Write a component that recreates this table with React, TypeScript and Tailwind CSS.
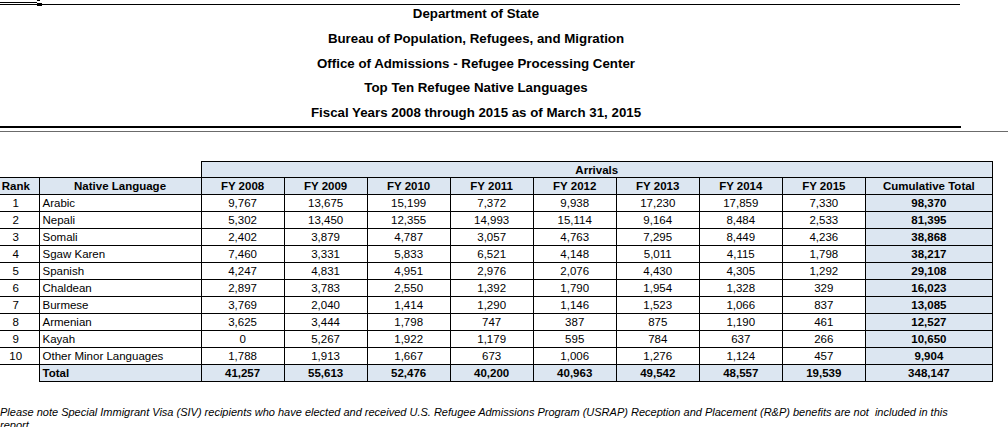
import React from "react";

const rows: [string, string, string[], string][] = [
  ["1", "Arabic", ["9,767", "13,675", "15,199", "7,372", "9,938", "17,230", "17,859", "7,330"], "98,370"],
  ["2", "Nepali", ["5,302", "13,450", "12,355", "14,993", "15,114", "9,164", "8,484", "2,533"], "81,395"],
  ["3", "Somali", ["2,402", "3,879", "4,787", "3,057", "4,763", "7,295", "8,449", "4,236"], "38,868"],
  ["4", "Sgaw Karen", ["7,460", "3,331", "5,833", "6,521", "4,148", "5,011", "4,115", "1,798"], "38,217"],
  ["5", "Spanish", ["4,247", "4,831", "4,951", "2,976", "2,076", "4,430", "4,305", "1,292"], "29,108"],
  ["6", "Chaldean", ["2,897", "3,783", "2,550", "1,392", "1,790", "1,954", "1,328", "329"], "16,023"],
  ["7", "Burmese", ["3,769", "2,040", "1,414", "1,290", "1,146", "1,523", "1,066", "837"], "13,085"],
  ["8", "Armenian", ["3,625", "3,444", "1,798", "747", "387", "875", "1,190", "461"], "12,527"],
  ["9", "Kayah", ["0", "5,267", "1,922", "1,179", "595", "784", "637", "266"], "10,650"],
  ["10", "Other Minor Languages", ["1,788", "1,913", "1,667", "673", "1,006", "1,276", "1,124", "457"], "9,904"],
];

const totals = ["41,257", "55,613", "52,476", "40,200", "40,963", "49,542", "48,557", "19,539"];
const years = ["FY 2008", "FY 2009", "FY 2010", "FY 2011", "FY 2012", "FY 2013", "FY 2014", "FY 2015"];

export default function App() {
  return (
    <div className="w-[1008px] h-[427px] overflow-hidden bg-white text-black font-['Liberation_Sans',Arial,sans-serif]">
      {/* top rule */}
      <div className="relative h-[5px] w-[960px]">
        <div className="absolute left-0 top-[2px] w-[37px] h-[1px] bg-black" />
        <div className="absolute left-0 top-[4px] w-[960px] h-[1px] bg-black" />
        <div className="absolute left-[37px] top-0 w-[3px] h-[1px] bg-black" />
        <div className="absolute left-[37px] top-[3px] w-[5px] h-[3px] bg-black" />
      </div>
      {/* titles */}
      <div className="w-[952px] text-center font-bold text-[13.3px]">
        <div className="h-[22px] pt-[2px] leading-[14px]">Department of State</div>
        <div className="h-[24.5px] leading-[24.5px]">Bureau of Population, Refugees, and Migration</div>
        <div className="h-[24.5px] leading-[24.5px]">Office of Admissions - Refugee Processing Center</div>
        <div className="h-[24.5px] leading-[24.5px]">Top Ten Refugee Native Languages</div>
        <div className="h-[24.5px] leading-[24.5px]">Fiscal Years 2008 through 2015 as of March 31, 2015</div>
      </div>
      <div className="mt-[1px] w-[961px] h-[2px] bg-black" />
      <div className="mt-[3px] w-full h-[1px] bg-[#6b6b6b]" />

      {/* table */}
      <table className="mt-[29px] table-fixed border-collapse w-[993px] text-[11.5px]">
        <colgroup>
          <col className="w-[39px]" />
          <col className="w-[162px]" />
          {years.map((y) => (
            <col key={y} className="w-[83px]" />
          ))}
          <col className="w-[127px]" />
        </colgroup>
        <tbody>
          <tr className="h-[16px]">
            <td className="p-0" />
            <td className="p-0" />
            <td colSpan={9} className="p-0 border border-black bg-[#dce6f1] text-center font-bold leading-[14px]">
              Arrivals
            </td>
          </tr>
          <tr className="h-[17px] bg-[#dce6f1] font-bold">
            <td className="p-0 pr-[7px] border-t border-b border-r border-black text-center leading-[15px]">Rank</td>
            <td className="p-0 border border-black text-center leading-[15px]">Native Language</td>
            {years.map((y) => (
              <td key={y} className="p-0 border border-black text-center leading-[15px]">
                {y}
              </td>
            ))}
            <td className="p-0 border border-black text-center leading-[15px]">Cumulative Total</td>
          </tr>
          {rows.map(([rank, lang, vals, cum]) => (
            <tr key={rank} className="h-[17px]">
              <td className="p-0 pr-[7px] border-t border-b border-r border-black text-center leading-[15px]">{rank}</td>
              <td className="p-0 pl-[3px] border border-black text-left leading-[15px] whitespace-nowrap">{lang}</td>
              {vals.map((v, i) => (
                <td key={i} className="p-0 border border-black text-center leading-[15px]">
                  {v}
                </td>
              ))}
              <td className="p-0 border border-black bg-[#dce6f1] text-center font-bold leading-[15px]">{cum}</td>
            </tr>
          ))}
          <tr className="h-[17px] font-bold">
            <td className="p-0" />
            <td className="p-0 pl-[3px] border border-black bg-[#dce6f1] text-left leading-[15px]">Total</td>
            {totals.map((v, i) => (
              <td key={i} className="p-0 border border-black bg-[#dce6f1] text-center leading-[15px]">
                {v}
              </td>
            ))}
            <td className="p-0 border border-black bg-[#dce6f1] text-center leading-[15px]">348,147</td>
          </tr>
        </tbody>
      </table>

      <p className="mt-[24px] w-[962px] text-[11px] italic leading-[13px]">
        Please note Special Immigrant Visa (SIV) recipients who have elected and received U.S. Refugee Admissions Program (USRAP) Reception and Placement (R&amp;P) benefits are not&nbsp; included in this report.
      </p>
    </div>
  );
}
